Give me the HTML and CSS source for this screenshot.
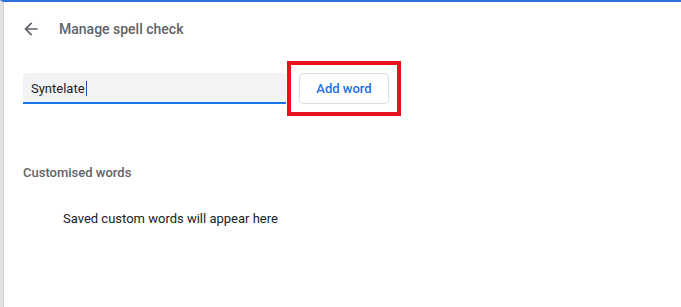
FILE: index.html
```html
<!DOCTYPE html>
<html>
<head>
<meta charset="utf-8">
<link rel="stylesheet" href="styles.css">
</head>
<body>
<div class="page">
  <div class="header">
    <svg class="back" width="20" height="20" viewBox="0 0 24 24"><path d="M20 11H7.83l5.59-5.59L12 4l-8 8 8 8 1.41-1.41L7.83 13H20v-2z" fill="#5f6368"/></svg>
    <h1 class="title">Manage spell check</h1>
  </div>
  <div class="add-row">
    <div class="input"><span class="input-text">Syntelate</span><span class="caret"></span></div>
    <div class="highlight"><button class="add-btn">Add word</button></div>
  </div>
  <div class="section-label">Customised words</div>
  <div class="empty">Saved custom words will appear here</div>
</div>
</body>
</html>
```
FILE: styles.css
```css
html, body {
  margin: 0;
  padding: 0;
  background: #ffffff;
  font-family: Roboto, "Liberation Sans", sans-serif;
  font-size: 13px;
}
.page {
  box-sizing: border-box;
  height: 307px;
  border-top: 2px solid #2f6fde;
  border-left: 3px solid #e2e2e2;
  box-shadow: inset 1px 0 0 #d2d2d2;
  background: #ffffff;
}
.header {
  height: 54px;
  display: flex;
  align-items: center;
  padding-left: 18px;
}
.back {
  display: block;
  flex: none;
}
.title {
  margin: 0 0 0 18px;
  font-size: 14px;
  font-weight: 500;
  color: #5f6368;
  line-height: 20px;
}
.add-row {
  margin-top: 5px;
  display: flex;
  align-items: center;
  padding-left: 20px;
}
.input {
  box-sizing: border-box;
  width: 263px;
  height: 31px;
  background: #f1f3f4;
  border-bottom: 2px solid #1a73e8;
  border-radius: 4px 4px 0 0;
  display: flex;
  align-items: center;
  padding-left: 8px;
  padding-top: 2px;
  color: #202124;
  font-size: 13px;
}
.caret {
  display: inline-block;
  width: 1px;
  height: 15px;
  background: #1a4fb8;
  margin-left: 1px;
}
.highlight {
  margin-left: 1px;
  border: 4px solid #e8141d;
  padding: 8px;
}
.add-btn {
  display: block;
  box-sizing: border-box;
  width: 90px;
  height: 31px;
  background: #ffffff;
  border: 1px solid #dadce0;
  border-radius: 4px;
  color: #1a73e8;
  font-family: Roboto, "Liberation Sans", sans-serif;
  font-size: 13px;
  font-weight: 500;
  padding: 0;
}
.section-label {
  margin-top: 47px;
  padding-left: 20px;
  line-height: 20px;
  font-weight: 500;
  color: #5f6368;
}
.empty {
  margin-top: 26px;
  padding-left: 60px;
  line-height: 20px;
  color: #202124;
}
```
